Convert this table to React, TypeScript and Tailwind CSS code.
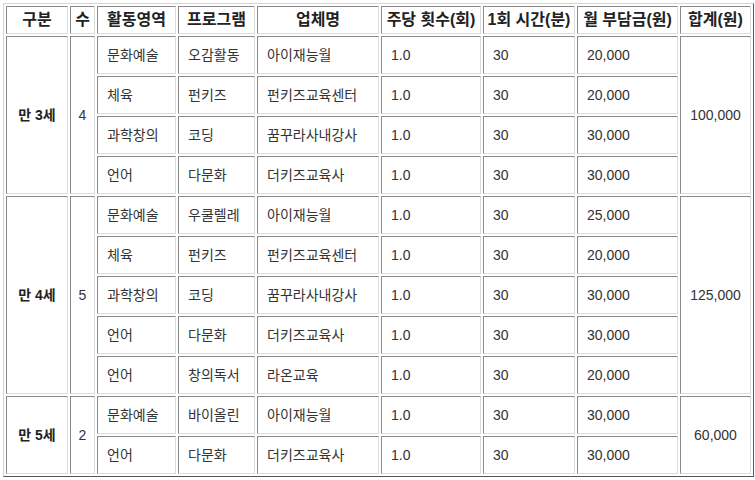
import React from "react";

type Row = {
	area: string;
	program: string;
	vendor: string;
	perWeek: string;
	minutes: string;
	fee: string;
};

type Group = {
	label: string;
	count: string;
	total: string;
	rows: Row[];
};

const groups: Group[] = [
	{
		label: "만 3세",
		count: "4",
		total: "100,000",
		rows: [
			{ area: "문화예술", program: "오감활동", vendor: "아이재능월", perWeek: "1.0", minutes: "30", fee: "20,000" },
			{ area: "체육", program: "펀키즈", vendor: "펀키즈교육센터", perWeek: "1.0", minutes: "30", fee: "20,000" },
			{ area: "과학창의", program: "코딩", vendor: "꿈꾸라사내강사", perWeek: "1.0", minutes: "30", fee: "30,000" },
			{ area: "언어", program: "다문화", vendor: "더키즈교육사", perWeek: "1.0", minutes: "30", fee: "30,000" },
		],
	},
	{
		label: "만 4세",
		count: "5",
		total: "125,000",
		rows: [
			{ area: "문화예술", program: "우쿨렐레", vendor: "아이재능월", perWeek: "1.0", minutes: "30", fee: "25,000" },
			{ area: "체육", program: "펀키즈", vendor: "펀키즈교육센터", perWeek: "1.0", minutes: "30", fee: "20,000" },
			{ area: "과학창의", program: "코딩", vendor: "꿈꾸라사내강사", perWeek: "1.0", minutes: "30", fee: "30,000" },
			{ area: "언어", program: "다문화", vendor: "더키즈교육사", perWeek: "1.0", minutes: "30", fee: "30,000" },
			{ area: "언어", program: "창의독서", vendor: "라온교육", perWeek: "1.0", minutes: "30", fee: "20,000" },
		],
	},
	{
		label: "만 5세",
		count: "2",
		total: "60,000",
		rows: [
			{ area: "문화예술", program: "바이올린", vendor: "아이재능월", perWeek: "1.0", minutes: "30", fee: "30,000" },
			{ area: "언어", program: "다문화", vendor: "더키즈교육사", perWeek: "1.0", minutes: "30", fee: "30,000" },
		],
	},
];

const headers: { title: string; width: string }[] = [
	{ title: "구분", width: "w-[62px]" },
	{ title: "수", width: "w-[25px]" },
	{ title: "활동영역", width: "w-[79px]" },
	{ title: "프로그램", width: "w-[77px]" },
	{ title: "업체명", width: "w-[122px]" },
	{ title: "주당 횟수(회)", width: "w-[100px]" },
	{ title: "1회 시간(분)", width: "w-[92px]" },
	{ title: "월 부담금(원)", width: "w-[101px]" },
	{ title: "합계(원)", width: "w-[71px]" },
];

// inset cell border, like a border="1" table
const cell =
	"border border-t-[#8a8a8a] border-l-[#8a8a8a] border-r-[#dcdcdc] border-b-[#dcdcdc] h-[38px] p-0 align-middle whitespace-nowrap";
const dataCell = `${cell} pl-[9px] text-left`;
const centerCell = `${cell} text-center`;

export default function App() {
	return (
		<div
			className="bg-white p-[3px] text-[14px] leading-[18px] text-[#333]"
			style={{ fontFamily: '"Liberation Sans", "Noto Sans CJK KR", sans-serif' }}
		>
			<table className="w-[751px] table-fixed border-separate border-spacing-[2px] border border-t-[#d6d6d6] border-l-[#d6d6d6] border-r-[#555] border-b-[#555]">
				<thead>
					<tr>
						{headers.map((h) => (
							<th
								key={h.title}
								className={`${h.width} border border-t-[#8a8a8a] border-l-[#8a8a8a] border-r-[#dcdcdc] border-b-[#dcdcdc] h-[28px] p-0 text-center align-middle whitespace-nowrap text-[16px] font-bold text-[#222]`}
							>
								{h.title}
							</th>
						))}
					</tr>
				</thead>
				<tbody>
					{groups.map((g) =>
						g.rows.map((r, i) => (
							<tr key={`${g.label}-${i}`}>
								{i === 0 && (
									<>
										<td rowSpan={g.rows.length} className={`${centerCell} font-bold text-[#222]`}>
											{g.label}
										</td>
										<td rowSpan={g.rows.length} className={centerCell}>
											{g.count}
										</td>
									</>
								)}
								<td className={dataCell}>{r.area}</td>
								<td className={dataCell}>{r.program}</td>
								<td className={dataCell}>{r.vendor}</td>
								<td className={dataCell}>{r.perWeek}</td>
								<td className={dataCell}>{r.minutes}</td>
								<td className={dataCell}>{r.fee}</td>
								{i === 0 && (
									<td rowSpan={g.rows.length} className={centerCell}>
										{g.total}
									</td>
								)}
							</tr>
						)),
					)}
				</tbody>
			</table>
		</div>
	);
}
